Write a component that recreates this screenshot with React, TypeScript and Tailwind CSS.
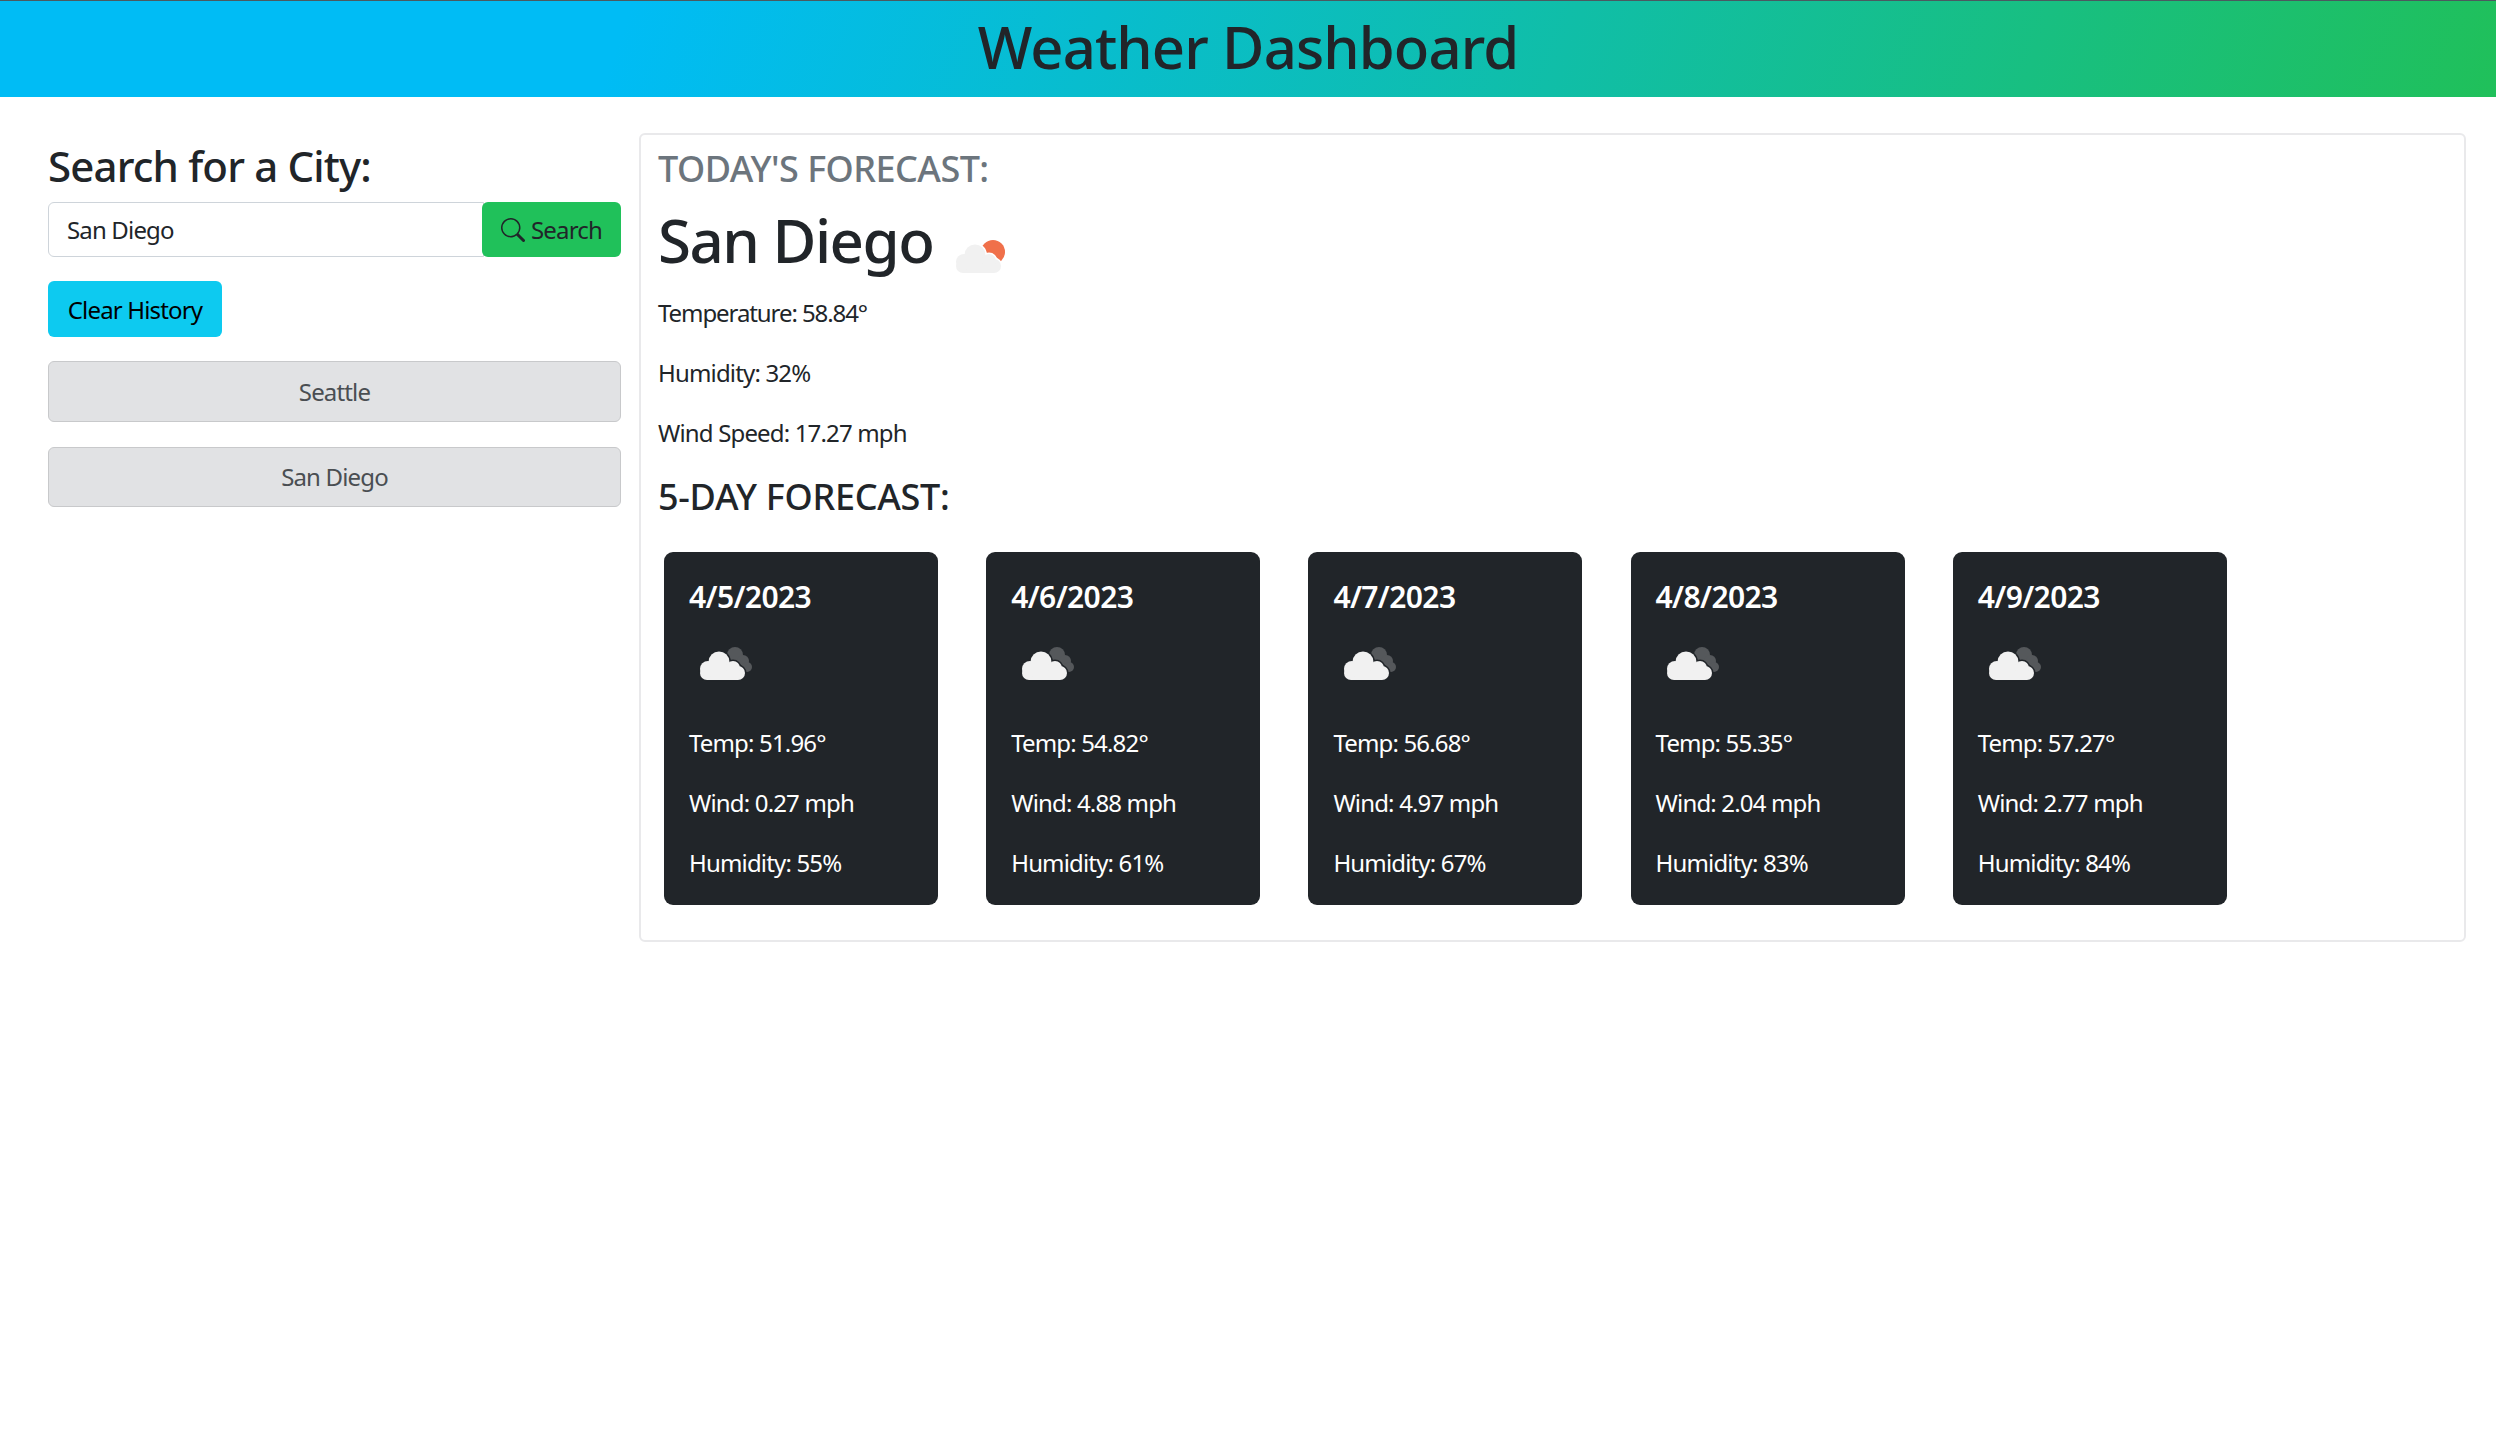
import { BsSearch } from "react-icons/bs";

const days = [
  { date: "4/5/2023", temp: "51.96", wind: "0.27", hum: "55" },
  { date: "4/6/2023", temp: "54.82", wind: "4.88", hum: "61" },
  { date: "4/7/2023", temp: "56.68", wind: "4.97", hum: "67" },
  { date: "4/8/2023", temp: "55.35", wind: "2.04", hum: "83" },
  { date: "4/9/2023", temp: "57.27", wind: "2.77", hum: "84" },
];

function CloudShape({ fill, stroke, sw = 0 }: { fill: string; stroke?: string; sw?: number }) {
  return (
    <g fill={fill} stroke={stroke} strokeWidth={sw}>
      <rect x="11" y="41" width="45" height="14" rx="7" />
      <circle cx="19" cy="44" r="8" />
      <circle cx="30" cy="37" r="10.5" />
      <circle cx="44" cy="43" r="7" />
    </g>
  );
}

function DarkCloud() {
  return (
    <svg width="80" height="80" viewBox="0 0 80 80" className="block">
      <g fill="#55585b">
        <circle cx="46" cy="30" r="8" />
        <circle cx="54" cy="36" r="6" />
        <circle cx="58" cy="42" r="5" />
      </g>
      <CloudShape fill="#212529" stroke="#212529" sw={3} />
      <CloudShape fill="#f1f1f1" />
    </svg>
  );
}

function SunCloud() {
  return (
    <svg width="60" height="40" viewBox="8 18 60 40" className="block">
      <circle cx="48" cy="34" r="12" fill="#f0704a" />
      <CloudShape fill="#ffffff" stroke="#ffffff" sw={3} />
      <CloudShape fill="#f1f1f1" />
    </svg>
  );
}

export default function App() {
  return (
    <div className="min-h-[1436px] bg-white text-[24px] leading-[36px] text-[#212529] font-['Noto_Sans','Open_Sans',sans-serif] tracking-[-0.035em]">
      <header className="h-[97px] border-t border-[#4a5a60] bg-[linear-gradient(110deg,#00bcf5_25%,#20c05a_100%)] flex items-center justify-center pb-[5px]">
        <h1 className="text-[58px] leading-[72px] font-medium tracking-[-0.015em]">Weather Dashboard</h1>
      </header>

      <main className="flex items-start pl-[48px] pr-[30px] pt-[36px] gap-[18px]">
        <aside className="w-[573px] shrink-0 pt-[2px]">
          <h3 className="text-[42px] leading-[50px] font-medium mb-[8px] mt-[6px] tracking-[-0.02em]">Search for a City:</h3>
          <div className="flex h-[55px] mt-[11px]">
            <div className="flex-1 border border-[#ced4da] rounded-l-[6px] pl-[18px] text-[24px] flex items-center bg-white">San Diego</div>
            <button className="w-[139px] bg-[#20c15a] rounded-[6px] -ml-[2px] flex items-center justify-center gap-[6px]">
              <BsSearch className="w-[24px] h-[24px]" />
              <span className="text-[24px]">Search</span>
            </button>
          </div>
          <button className="mt-[24px] h-[56px] w-[174px] bg-[#0dcaf0] rounded-[6px] text-black block pt-[2px]">Clear History</button>
          <button className="mt-[24px] h-[61px] w-full bg-[#e1e2e4] border border-[#c8c9cb] rounded-[6px] text-[#4a4e52] block pt-[1px]">Seattle</button>
          <button className="mt-[25px] h-[60px] w-full bg-[#e1e2e4] border border-[#c8c9cb] rounded-[6px] text-[#4a4e52] block">San Diego</button>
        </aside>

        <section className="flex-1 h-[809px] border-2 border-[#e9e9eb] rounded-[6px] pl-[17px] pr-[18px]">
          <h4 className="text-[36px] leading-[44px] font-medium text-[#6c757d] mt-[12px] tracking-[-0.015em]">TODAY'S FORECAST:</h4>
          <div className="flex items-start mt-[13px]">
            <h1 className="text-[60px] leading-[72px] font-medium tracking-[-0.025em]">San Diego</h1>
            <div className="ml-[20px] mt-[32px]"><SunCloud /></div>
          </div>
          <p className="mt-[19px] mb-[24px] tracking-[-0.045em]">Temperature: 58.84°</p>
          <p className="mb-[24px]">Humidity: 32%</p>
          <p className="mb-[24px]">Wind Speed: 17.27 mph</p>
          <h4 className="text-[36px] leading-[44px] font-medium tracking-[-0.008em]">5-DAY FORECAST:</h4>
          <div className="flex gap-[48.2px] pl-[6px] mt-[33px]">
            {days.map((d) => (
              <div key={d.date} className="w-[274px] h-[353px] bg-[#212529] rounded-[9px] text-white pl-[25px] pr-[26px] pt-[26px]">
                <h5 className="text-[30px] leading-[38px] font-semibold tracking-[-0.02em]">{d.date}</h5>
                <div className="mt-[9px] h-[80px]"><DarkCloud /></div>
                <p className="mt-[20px] mb-[24px]">Temp: {d.temp}°</p>
                <p className="mb-[24px]">Wind: {d.wind} mph</p>
                <p>Humidity: {d.hum}%</p>
              </div>
            ))}
          </div>
        </section>
      </main>
    </div>
  );
}
